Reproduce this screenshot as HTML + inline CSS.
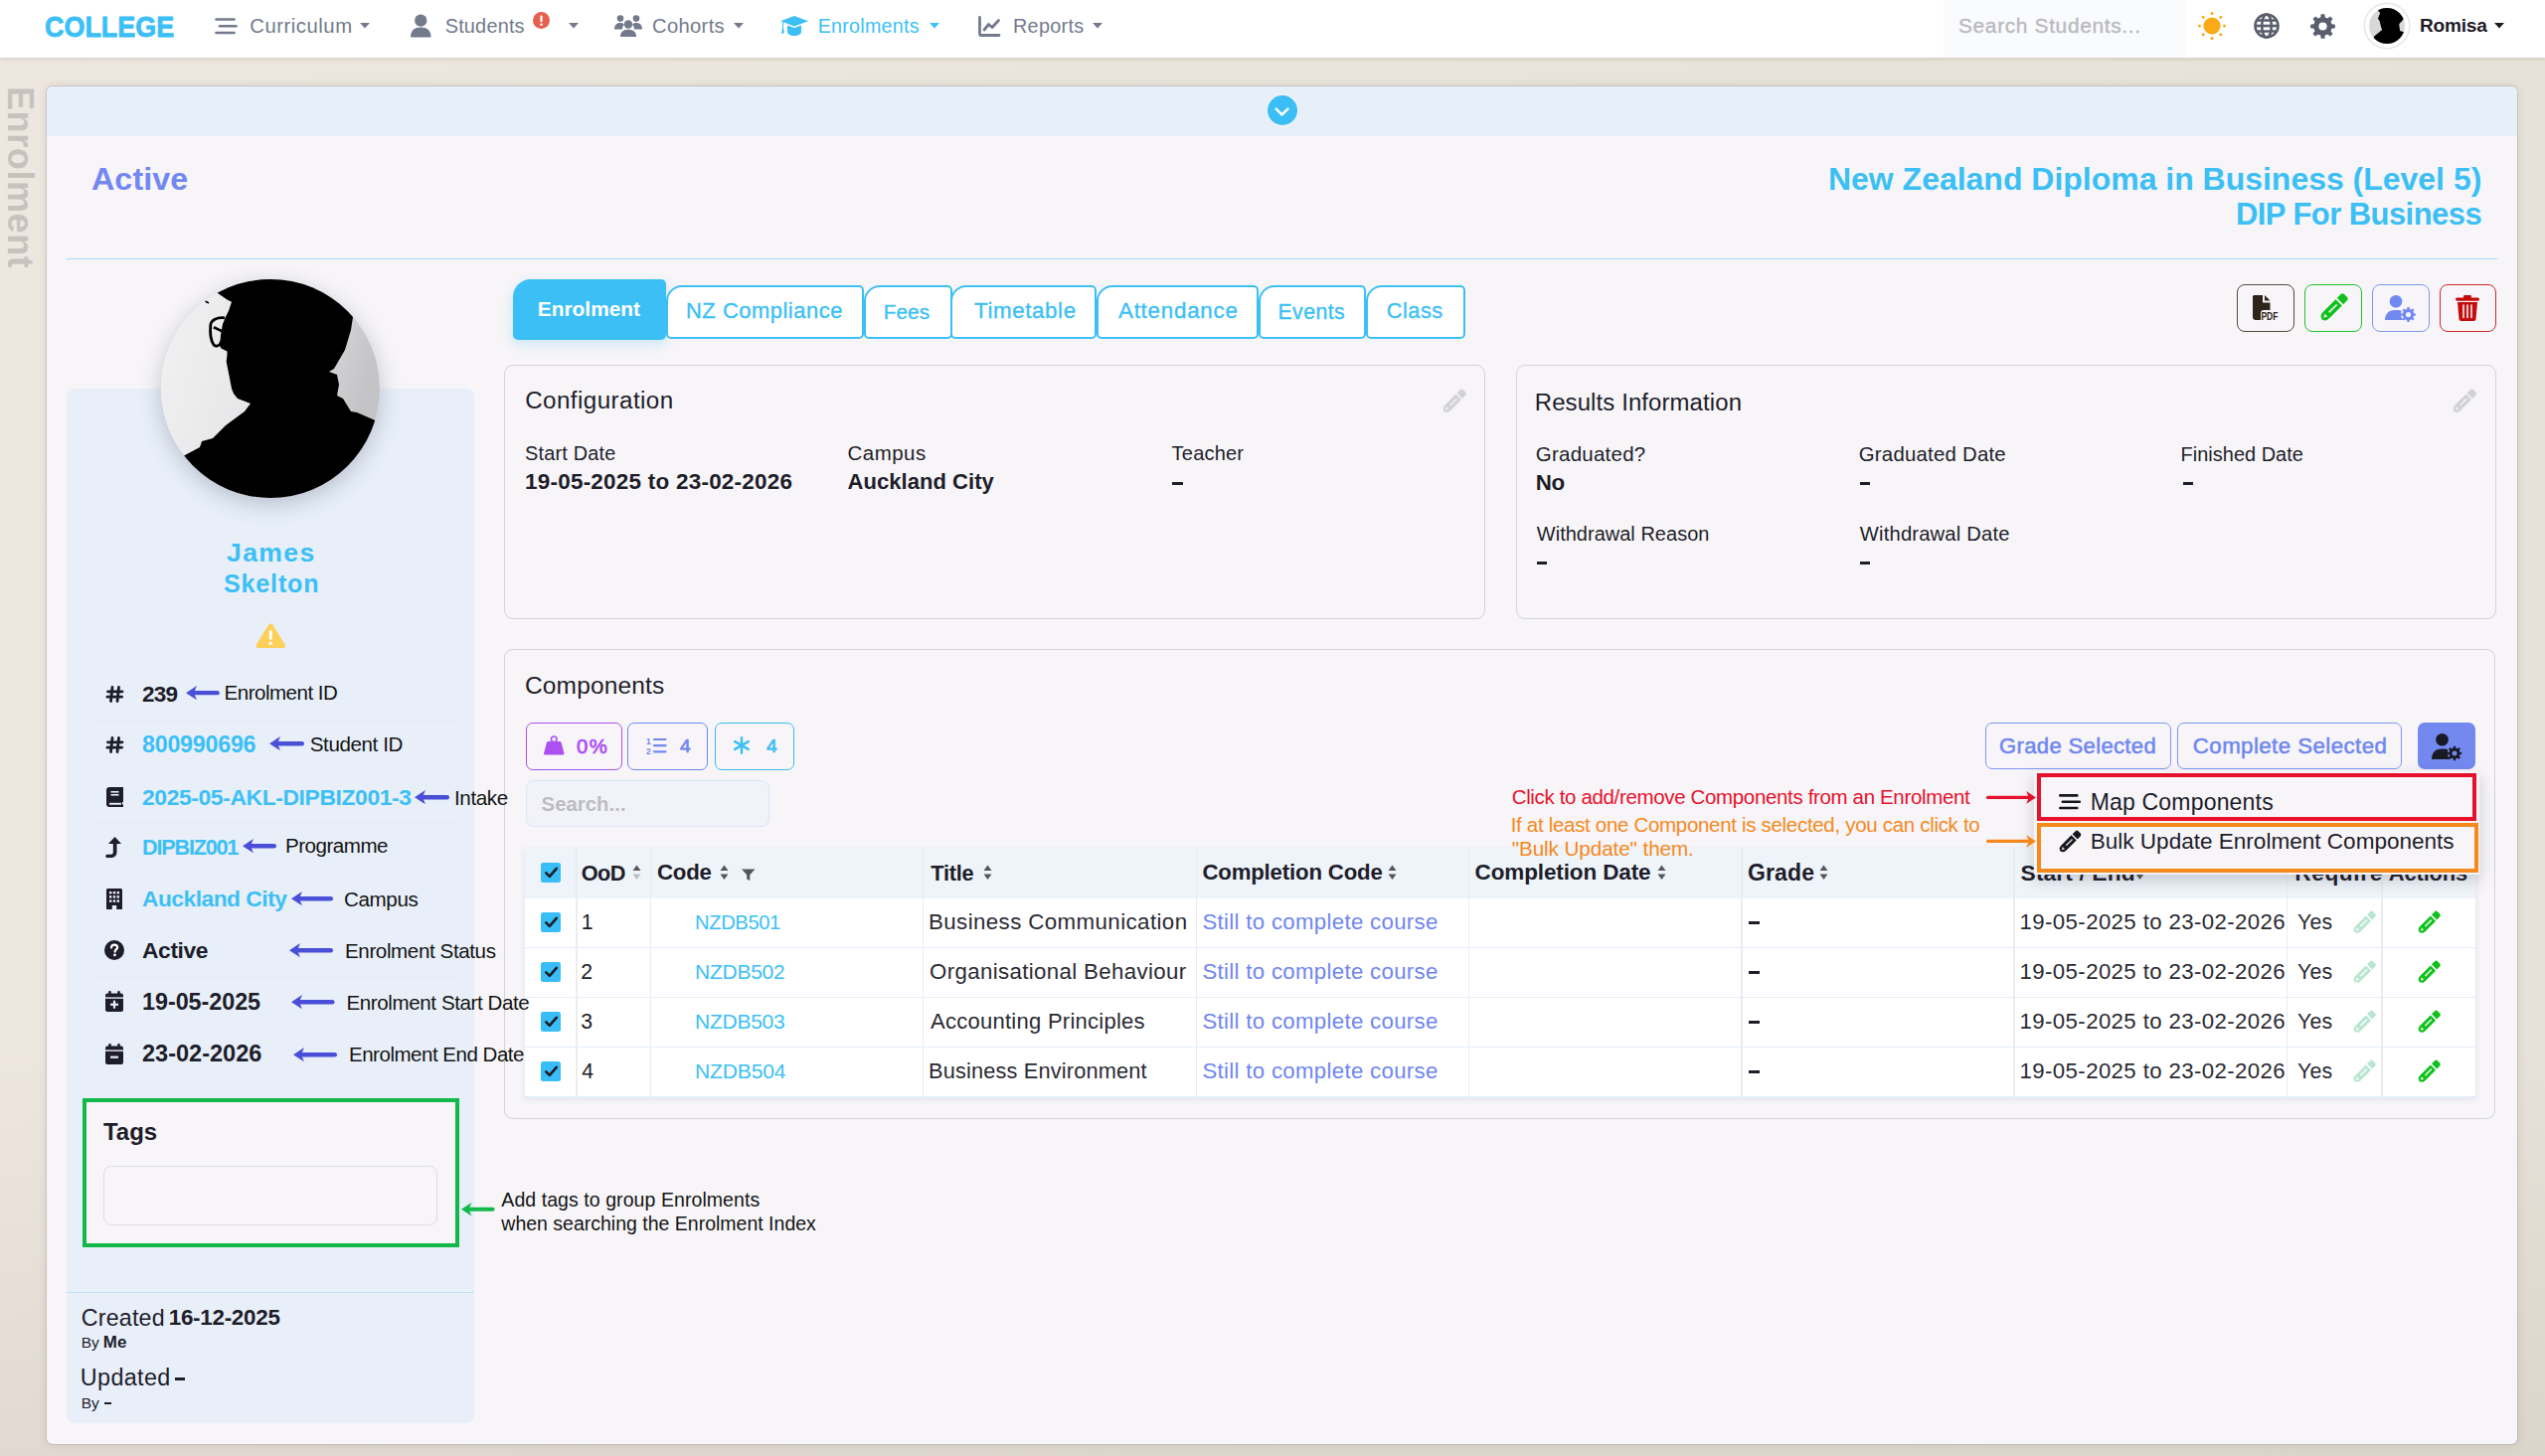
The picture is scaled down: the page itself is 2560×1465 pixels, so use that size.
<!DOCTYPE html><html><head><meta charset="utf-8"><title>Enrolment</title><style>
html,body{margin:0;padding:0;width:2560px;height:1465px;overflow:hidden;}
body{position:relative;font-family:"Liberation Sans",sans-serif;background:linear-gradient(90deg,#eee7e0 0%,#e9e4dc 45%,#e7e2d9 100%);}
.t{position:absolute;white-space:nowrap;line-height:0;}
.b{position:absolute;box-sizing:border-box;}
svg{display:block}
</style></head><body>
<div class="b" style="left:0px;top:58px;width:2560px;height:1407px;background:linear-gradient(180deg,rgba(0,0,0,0) 0%,rgba(0,0,0,0) 70%,rgba(60,40,20,0.07) 100%);"></div>
<div class="b" style="left:0px;top:0px;width:2560px;height:58px;background:#fff;box-shadow:0 1px 4px rgba(80,60,40,0.18);"></div>
<div class="t" style="left:45.31px;top:26.07px;font-size:30.38px;color:#3cbff5;transform-origin:0 0;transform:scaleX(0.8869);font-weight:bold;-webkit-text-stroke:0.8px #3cbff5;">COLLEGE</div>
<svg style="position:absolute;left:215.5px;top:17.8px;width:23.0px;height:17.0px;overflow:visible" viewBox="0 0 23.0 17.0" ><g transform="scale(1.0)" stroke="#737a8c" stroke-width="2.6" stroke-linecap="round"><line x1="1.5" y1="1.5" x2="19.5" y2="1.5"/><line x1="5" y1="8.3" x2="21.5" y2="8.3"/><line x1="1.5" y1="15" x2="19.5" y2="15"/></g></svg>
<div class="t" style="left:251.30px;top:25.96px;font-size:20.29px;color:#737a8c;letter-spacing:0.522px;">Curriculum</div>
<svg style="position:absolute;left:362.4px;top:23px;width:10px;height:5.6px;overflow:visible" viewBox="0 0 10 5.6" ><path d="M0 0H10L5.0 5.6Z" fill="#737a8c"/></svg>
<svg style="position:absolute;left:413px;top:15px;width:20.5px;height:22.5px;overflow:visible" viewBox="0 0 20.5 22.5" ><circle cx="10.25" cy="5.625" r="6.1499999999999995" fill="#737a8c"/><path d="M0 22.5 C0 15.3 4.1000000000000005 12.375000000000002 10.25 12.375000000000002 C16.400000000000002 12.375000000000002 20.5 15.3 20.5 22.5 Z" fill="#737a8c"/></svg>
<div class="t" style="left:447.70px;top:26.10px;font-size:19.91px;color:#737a8c;letter-spacing:0.186px;">Students</div>
<svg style="position:absolute;left:535.5px;top:12px;width:17px;height:17px;overflow:visible" viewBox="0 0 17 17" ><circle cx="8.5" cy="8.5" r="8.5" fill="#e5604f"/><rect x="7.4" y="3.6" width="2.2" height="6.6" rx="1" fill="#fff"/><circle cx="8.5" cy="12.7" r="1.3" fill="#fff"/></svg>
<svg style="position:absolute;left:571.6px;top:23px;width:10px;height:5.6px;overflow:visible" viewBox="0 0 10 5.6" ><path d="M0 0H10L5.0 5.6Z" fill="#737a8c"/></svg>
<svg style="position:absolute;left:617.7px;top:15px;width:28px;height:22px;overflow:visible" viewBox="0 0 28 22" ><circle cx="6" cy="3.6" r="3.3" fill="#737a8c"/><circle cx="22" cy="3.6" r="3.3" fill="#737a8c"/><path d="M0 14.5 C0 10 2.5 8 6 8 C8 8 9 8.6 10 9.5 C8.5 11 8 13 8 14.5Z" fill="#737a8c"/><path d="M28 14.5 C28 10 25.5 8 22 8 C20 8 19 8.6 18 9.5 C19.5 11 20 13 20 14.5Z" fill="#737a8c"/><circle cx="14" cy="9.5" r="4.2" fill="#737a8c"/><path d="M6 22 C6 17 9 14.8 14 14.8 C19 14.8 22 17 22 22Z" fill="#737a8c"/></svg>
<div class="t" style="left:656.00px;top:25.99px;font-size:20.21px;color:#737a8c;letter-spacing:0.333px;">Cohorts</div>
<svg style="position:absolute;left:738px;top:23px;width:10px;height:5.6px;overflow:visible" viewBox="0 0 10 5.6" ><path d="M0 0H10L5.0 5.6Z" fill="#737a8c"/></svg>
<svg style="position:absolute;left:784.5px;top:16px;width:28px;height:20px;overflow:visible" viewBox="0 0 28 20" ><path d="M14 0 L28 5.2 L14 10.4 L3 6.3 L3 12 L4 17 L1 18 L2 12 L2 5.5 L0 5.2Z" fill="#3cbff5"/><path d="M7 9.5 L14 12 L21 9.5 L21 16 C21 18.5 17.5 20 14 20 C10.5 20 7 18.5 7 16Z" fill="#3cbff5"/></svg>
<div class="t" style="left:822.70px;top:26.17px;font-size:19.71px;color:#3cbff5;letter-spacing:0.256px;">Enrolments</div>
<svg style="position:absolute;left:935px;top:23px;width:10px;height:5.6px;overflow:visible" viewBox="0 0 10 5.6" ><path d="M0 0H10L5.0 5.6Z" fill="#3cbff5"/></svg>
<svg style="position:absolute;left:983.8px;top:16px;width:23px;height:21px;overflow:visible" viewBox="0 0 23 21" ><g fill="none" stroke="#737a8c" stroke-width="2.8" stroke-linecap="round" stroke-linejoin="round"><path d="M1.5 1.5 V18 a1.5 1.5 0 0 0 1.5 1.5 H21"/><path d="M6 14 L10.5 8.5 L14 11.5 L20.5 4.5"/></g></svg>
<div class="t" style="left:1019.00px;top:26.15px;font-size:19.77px;color:#737a8c;letter-spacing:0.333px;">Reports</div>
<svg style="position:absolute;left:1098.6px;top:23px;width:10px;height:5.6px;overflow:visible" viewBox="0 0 10 5.6" ><path d="M0 0H10L5.0 5.6Z" fill="#737a8c"/></svg>
<div class="b" style="left:1955px;top:0px;width:244px;height:57px;background:#fafbfd;"></div>
<div class="t" style="left:1970.00px;top:25.75px;font-size:20.92px;color:#b9b9bd;letter-spacing:0.647px;-webkit-text-stroke:0.35px #b9b9bd;">Search Students...</div>
<svg style="position:absolute;left:2211px;top:12px;width:28px;height:28px;overflow:visible" viewBox="0 0 28 28" ><circle cx="14" cy="14" r="8.6" fill="#fba918"/><circle cx="26.50" cy="14.00" r="1.5" fill="#fba918"/><circle cx="22.84" cy="22.84" r="1.5" fill="#fba918"/><circle cx="14.00" cy="26.50" r="1.5" fill="#fba918"/><circle cx="5.16" cy="22.84" r="1.5" fill="#fba918"/><circle cx="1.50" cy="14.00" r="1.5" fill="#fba918"/><circle cx="5.16" cy="5.16" r="1.5" fill="#fba918"/><circle cx="14.00" cy="1.50" r="1.5" fill="#fba918"/><circle cx="22.84" cy="5.16" r="1.5" fill="#fba918"/></svg>
<svg style="position:absolute;left:2267px;top:13px;width:26px;height:26px;overflow:visible" viewBox="0 0 26 26" ><g fill="none" stroke="#5a5d6c" stroke-width="2.6"><circle cx="13" cy="13" r="11.5"/><ellipse cx="13" cy="13" rx="4.8" ry="11.5"/><line x1="1.5" y1="13" x2="24.5" y2="13"/><path d="M3.5 7.5 H22.5 M3.5 18.5 H22.5"/></g></svg>
<svg style="position:absolute;left:2322.5px;top:12.5px;width:27.0px;height:27.0px;overflow:visible" viewBox="0 0 27.0 27.0" ><polygon points="22.48,11.30 25.86,11.63 25.86,15.37 22.48,15.70 21.41,18.30 23.56,20.92 20.92,23.56 18.30,21.41 15.70,22.48 15.37,25.86 11.63,25.86 11.30,22.48 8.70,21.41 6.08,23.56 3.44,20.92 5.59,18.30 4.52,15.70 1.14,15.37 1.14,11.63 4.52,11.30 5.59,8.70 3.44,6.08 6.08,3.44 8.70,5.59 11.30,4.52 11.63,1.14 15.37,1.14 15.70,4.52 18.30,5.59 20.92,3.44 23.56,6.08 21.41,8.70" fill="#5a5d6c"/><circle cx="13.5" cy="13.5" r="9.06" fill="#5a5d6c"/><circle cx="13.5" cy="13.5" r="4.12" fill="#fff"/></svg>
<div class="b" style="left:2379px;top:4px;width:44px;height:44px;border-radius:50%;background:#fff;box-shadow:0 0 0 1.5px #e6e6ea;"></div>
<svg style="position:absolute;left:2383px;top:8px;width:36px;height:36px" viewBox="0 0 220 220"><defs><clipPath id="cs"><circle cx="110" cy="110" r="110"/></clipPath></defs><g clip-path="url(#cs)"><rect width="220" height="220" fill="#d8d8d8"/><path d="M40 0 L220 0 L220 60 L185 100 L190 140 L220 150 L220 220 L20 220 L30 175 L80 135 L72 110 L65 80 L55 65 L68 30Z" fill="#000"/></g></svg>
<div class="t" style="left:2434.00px;top:26.29px;font-size:19.06px;color:#1c1b27;font-weight:bold;letter-spacing:-0.200px;">Romisa</div>
<svg style="position:absolute;left:2508.8px;top:23px;width:10px;height:5.6px;overflow:visible" viewBox="0 0 10 5.6" ><path d="M0 0H10L5.0 5.6Z" fill="#1c1b27"/></svg>
<div class="t" style="left:0;top:0;font-size:36px;font-weight:bold;color:#c6c3be;line-height:0;transform-origin:0 0;transform:translate(19.6px,87px) rotate(90deg);letter-spacing:0.6px">Enrolment</div>
<div class="b" style="left:46.6px;top:86.6px;width:2485.6px;height:1366.1000000000001px;background:#f7f5f8;border-radius:6px;box-shadow:0 0 0 1px rgba(170,170,180,0.45),0 0 10px rgba(80,60,40,0.15);"></div>
<div class="b" style="left:46.6px;top:86.6px;width:2485.6px;height:50.400000000000006px;background:#e7eff9;border-radius:6px 6px 0 0;"></div>
<div class="b" style="left:1274.5px;top:96px;width:30px;height:30px;border-radius:50%;background:#3bbef5;box-shadow:0 0 0 1.5px rgba(255,255,255,0.3)"></div>
<svg style="position:absolute;left:1282px;top:108px;width:15px;height:9px;overflow:visible" viewBox="0 0 15 9" ><path d="M1.6 1.6 L7.5 7.4 L13.4 1.6" fill="none" stroke="#fff" stroke-width="2.6" stroke-linecap="round" stroke-linejoin="round"/></svg>
<div class="t" style="left:92.00px;top:179.63px;font-size:32.23px;color:#7287f0;font-weight:bold;letter-spacing:0.100px;">Active</div>
<div class="t" style="left:1839.00px;top:179.92px;font-size:31.97px;color:#3cbff5;font-weight:bold;">New Zealand Diploma in Business (Level 5)</div>
<div class="t" style="left:2249.00px;top:216.27px;font-size:30.94px;color:#3cbff5;font-weight:bold;letter-spacing:-0.533px;">DIP For Business</div>
<div class="b" style="left:67px;top:259.5px;width:2444.6px;height:1.5px;background:#a9dcf6;"></div>
<div class="b" style="left:67px;top:391.4px;width:410px;height:1040.3000000000002px;background:#e8eff9;border-radius:8px;"></div>
<div class="b" style="left:162px;top:280.5px;width:220px;height:220px;border-radius:50%;box-shadow:0 6px 22px rgba(60,70,90,0.28);"></div>
<svg style="position:absolute;left:162px;top:280.5px;width:220px;height:220px" viewBox="0 0 220 220">
<defs><clipPath id="av"><circle cx="110" cy="110" r="110"/></clipPath>
<linearGradient id="avg" x1="0" y1="0" x2="1" y2="0.3"><stop offset="0" stop-color="#f2f2f3"/><stop offset="0.55" stop-color="#e6e6e8"/><stop offset="1" stop-color="#c4c4c6"/></linearGradient></defs>
<g clip-path="url(#av)"><rect width="220" height="220" fill="url(#avg)"/>
<path d="M40 0 L57 14 L66.5 20.4 L71 22.7 L68 31.7 L65 37.8 L62 45 L60 56 L59.7 60.4 L58.2 65 L60.4 69.5 L66.5 72.5 L66.5 75.5 L65.7 83 L68 94.4 L71 110 L73 115 L77 120 L90 125 L84 133 L65 147 L52 160 L41 163 L39 169 L24 177 L0 190 L0 220 L220 220 L220 144 L197 134 L191 133 L183 120 L177 117 L179 106 L177 96 L169 93 L174 90 L185 71 L191 51 L193 38 L220 30 L220 0 Z" fill="#000"/>
<path d="M64 38.8 C56 38 50.5 41 49.8 46 C49.2 53 50.2 62 53 66 C55 68 58 67.5 60.5 64" fill="none" stroke="#000" stroke-width="2.8"/>
<path d="M52.9 48.3 L62.7 52.9" stroke="#000" stroke-width="2.6"/>
<path d="M44.5 22 L48 24" stroke="#000" stroke-width="1.6"/>
</g></svg>
<div class="t" style="left:228.00px;top:555.78px;font-size:26.60px;color:#3cbff5;font-weight:bold;letter-spacing:1.375px;">James</div>
<div class="t" style="left:224.90px;top:587.29px;font-size:25.11px;color:#3cbff5;font-weight:bold;letter-spacing:0.833px;">Skelton</div>
<svg style="position:absolute;left:257px;top:625.7px;width:30.5px;height:26.1px;overflow:visible" viewBox="0 0 30.5 26.1" ><path d="M15.25 1.5 C16.3 1.5 17 2 17.6 3 L29.6 22.6 C30.6 24.3 29.6 26.1 27.6 26.1 L2.9 26.1 C0.9 26.1 -0.1 24.3 0.9 22.6 L12.9 3 C13.5 2 14.2 1.5 15.25 1.5Z" fill="#fdd05c"/><rect x="13.8" y="8.2" width="2.9" height="9.5" rx="1.4" fill="#fff"/><circle cx="15.25" cy="21.3" r="1.8" fill="#fff"/></svg>
<svg style="position:absolute;left:107px;top:690.1px;width:17px;height:17px;overflow:visible" viewBox="0 0 17 17" ><g stroke="#1e1d2a" stroke-width="2.8" stroke-linecap="round"><line x1="6" y1="1.5" x2="4.5" y2="15.5"/><line x1="12.5" y1="1.5" x2="11" y2="15.5"/><line x1="1.5" y1="5.8" x2="16" y2="5.8"/><line x1="1" y1="11.2" x2="15.5" y2="11.2"/></g></svg>
<div class="t" style="left:143.00px;top:698.78px;font-size:22.57px;color:#1e1d2a;font-weight:bold;letter-spacing:-0.800px;">239</div>
<svg style="position:absolute;left:187px;top:689.875px;width:33.80000000000001px;height:14.25px;overflow:visible" viewBox="0 0 33.80000000000001 14.25" ><line x1="5.7" y1="7.125" x2="31.55000000000001" y2="7.125" stroke="#4a4fd8" stroke-width="4.5" stroke-linecap="round"/><path d="M0 7.125 L10.924999999999999 0 L8.075 7.125 L10.924999999999999 14.25Z" fill="#4a4fd8"/></svg>
<div class="t" style="left:225.50px;top:697.37px;font-size:20.56px;color:#141414;letter-spacing:-0.500px;z-index:5;">Enrolment ID</div>
<div class="b" style="left:90px;top:724.5px;width:371px;height:1.0px;background:rgba(205,210,220,0.14);"></div>
<svg style="position:absolute;left:107px;top:741.0px;width:17px;height:17px;overflow:visible" viewBox="0 0 17 17" ><g stroke="#1e1d2a" stroke-width="2.8" stroke-linecap="round"><line x1="6" y1="1.5" x2="4.5" y2="15.5"/><line x1="12.5" y1="1.5" x2="11" y2="15.5"/><line x1="1.5" y1="5.8" x2="16" y2="5.8"/><line x1="1" y1="11.2" x2="15.5" y2="11.2"/></g></svg>
<div class="t" style="left:143.00px;top:749.43px;font-size:23.29px;color:#3cbff5;font-weight:bold;letter-spacing:-0.250px;">800990696</div>
<svg style="position:absolute;left:271px;top:741.375px;width:35px;height:14.25px;overflow:visible" viewBox="0 0 35 14.25" ><line x1="5.7" y1="7.125" x2="32.75" y2="7.125" stroke="#4a4fd8" stroke-width="4.5" stroke-linecap="round"/><path d="M0 7.125 L10.924999999999999 0 L8.075 7.125 L10.924999999999999 14.25Z" fill="#4a4fd8"/></svg>
<div class="t" style="left:311.80px;top:748.85px;font-size:20.62px;color:#141414;letter-spacing:-0.422px;z-index:5;">Student ID</div>
<div class="b" style="left:90px;top:776.5px;width:371px;height:1.0px;background:rgba(205,210,220,0.14);"></div>
<svg style="position:absolute;left:107px;top:791.5px;width:17px;height:20px;overflow:visible" viewBox="0 0 17 20" ><path d="M3 0 H17 V15 H16 V17.5 H17 V20 H3 C1.3 20 0 18.7 0 17 V3 C0 1.3 1.3 0 3 0Z" fill="#1e1d2a"/><rect x="3" y="15.8" width="12" height="1.9" fill="#e8eff9"/><rect x="4.5" y="4" width="8" height="1.6" fill="#e8eff9"/><rect x="4.5" y="7" width="8" height="1.6" fill="#e8eff9"/></svg>
<div class="t" style="left:143.00px;top:801.56px;font-size:22.91px;color:#3cbff5;font-weight:bold;letter-spacing:-0.409px;">2025-05-AKL-DIPBIZ001-3</div>
<svg style="position:absolute;left:417px;top:795.375px;width:35px;height:14.25px;overflow:visible" viewBox="0 0 35 14.25" ><line x1="5.7" y1="7.125" x2="32.75" y2="7.125" stroke="#4a4fd8" stroke-width="4.5" stroke-linecap="round"/><path d="M0 7.125 L10.924999999999999 0 L8.075 7.125 L10.924999999999999 14.25Z" fill="#4a4fd8"/></svg>
<div class="t" style="left:457.00px;top:802.85px;font-size:20.63px;color:#141414;letter-spacing:-0.400px;z-index:5;">Intake</div>
<div class="b" style="left:90px;top:827.4px;width:371px;height:1.0px;background:rgba(205,210,220,0.14);"></div>
<svg style="position:absolute;left:106px;top:842.4px;width:18px;height:21px;overflow:visible" viewBox="0 0 18 21" ><path d="M9.5 0 L16 7 H11.5 V15.5 C11.5 18.8 9 21 5.8 21 H2 C1 21 0.3 20.3 0.3 19.4 C0.3 18.5 1 17.8 2 17.8 H5.6 C7 17.8 7.8 17 7.8 15.6 V7 H3Z" fill="#1e1d2a"/></svg>
<div class="t" style="left:143.00px;top:852.86px;font-size:21.73px;color:#3cbff5;font-weight:bold;letter-spacing:-1.250px;">DIPBIZ001</div>
<svg style="position:absolute;left:244px;top:843.975px;width:34px;height:14.25px;overflow:visible" viewBox="0 0 34 14.25" ><line x1="5.7" y1="7.125" x2="31.75" y2="7.125" stroke="#4a4fd8" stroke-width="4.5" stroke-linecap="round"/><path d="M0 7.125 L10.924999999999999 0 L8.075 7.125 L10.924999999999999 14.25Z" fill="#4a4fd8"/></svg>
<div class="t" style="left:287.00px;top:851.46px;font-size:20.59px;color:#141414;letter-spacing:-0.500px;z-index:5;">Programme</div>
<div class="b" style="left:90px;top:879px;width:371px;height:1px;background:rgba(205,210,220,0.14);"></div>
<svg style="position:absolute;left:107px;top:893.5px;width:16px;height:21px;overflow:visible" viewBox="0 0 16 21" ><path d="M1.5 0 H14.5 C15.3 0 16 .7 16 1.5 V21 H10.2 V17 H5.8 V21 H0 V1.5 C0 .7 .7 0 1.5 0Z" fill="#1e1d2a"/><g fill="#e8eff9"><rect x="3" y="3" width="2.4" height="2.4"/><rect x="6.8" y="3" width="2.4" height="2.4"/><rect x="10.6" y="3" width="2.4" height="2.4"/><rect x="3" y="7.2" width="2.4" height="2.4"/><rect x="6.8" y="7.2" width="2.4" height="2.4"/><rect x="10.6" y="7.2" width="2.4" height="2.4"/><rect x="3" y="11.4" width="2.4" height="2.4"/><rect x="6.8" y="11.4" width="2.4" height="2.4"/><rect x="10.6" y="11.4" width="2.4" height="2.4"/></g></svg>
<div class="t" style="left:143.00px;top:904.10px;font-size:22.79px;color:#3cbff5;font-weight:bold;letter-spacing:-0.500px;">Auckland City</div>
<svg style="position:absolute;left:293px;top:897.375px;width:42px;height:14.25px;overflow:visible" viewBox="0 0 42 14.25" ><line x1="5.7" y1="7.125" x2="39.75" y2="7.125" stroke="#4a4fd8" stroke-width="4.5" stroke-linecap="round"/><path d="M0 7.125 L10.924999999999999 0 L8.075 7.125 L10.924999999999999 14.25Z" fill="#4a4fd8"/></svg>
<div class="t" style="left:346.00px;top:904.85px;font-size:20.62px;color:#141414;letter-spacing:-0.400px;z-index:5;">Campus</div>
<div class="b" style="left:90px;top:931px;width:371px;height:1px;background:rgba(205,210,220,0.14);"></div>
<svg style="position:absolute;left:105px;top:946px;width:20px;height:20px;overflow:visible" viewBox="0 0 20 20" ><circle cx="10" cy="10" r="10" fill="#1e1d2a"/><path d="M7 7.6 C7 5.8 8.3 4.7 10.1 4.7 C11.9 4.7 13.1 5.8 13.1 7.3 C13.1 9.4 10.6 9.5 10.6 11.6" fill="none" stroke="#fff" stroke-width="2.2" stroke-linecap="round"/><circle cx="10.5" cy="14.9" r="1.4" fill="#fff"/></svg>
<div class="t" style="left:143.00px;top:956.08px;font-size:22.85px;color:#1e1d2a;font-weight:bold;letter-spacing:-0.400px;">Active</div>
<svg style="position:absolute;left:291px;top:949.375px;width:44px;height:14.25px;overflow:visible" viewBox="0 0 44 14.25" ><line x1="5.7" y1="7.125" x2="41.75" y2="7.125" stroke="#4a4fd8" stroke-width="4.5" stroke-linecap="round"/><path d="M0 7.125 L10.924999999999999 0 L8.075 7.125 L10.924999999999999 14.25Z" fill="#4a4fd8"/></svg>
<div class="t" style="left:347.00px;top:956.86px;font-size:20.60px;color:#141414;letter-spacing:-0.400px;z-index:5;">Enrolment Status</div>
<div class="b" style="left:90px;top:982.6px;width:371px;height:1.0px;background:rgba(205,210,220,0.14);"></div>
<svg style="position:absolute;left:106px;top:997.1px;width:18px;height:21px;overflow:visible" viewBox="0 0 18 21" ><rect x="3.2" y="0" width="2.6" height="4" rx="1" fill="#1e1d2a"/><rect x="12.2" y="0" width="2.6" height="4" rx="1" fill="#1e1d2a"/><rect x="0" y="2.5" width="18" height="18.5" rx="2" fill="#1e1d2a"/><rect x="0" y="6.4" width="18" height="1.4" fill="#e8eff9"/><rect x="5" y="12.6" width="8" height="2.2" fill="#e8eff9"/><rect x="7.9" y="9.7" width="2.2" height="8" fill="#e8eff9"/></svg>
<div class="t" style="left:143.00px;top:1007.50px;font-size:23.36px;color:#1e1d2a;font-weight:bold;letter-spacing:-0.044px;">19-05-2025</div>
<svg style="position:absolute;left:292.5px;top:1001.375px;width:43.5px;height:14.25px;overflow:visible" viewBox="0 0 43.5 14.25" ><line x1="5.7" y1="7.125" x2="41.25" y2="7.125" stroke="#4a4fd8" stroke-width="4.5" stroke-linecap="round"/><path d="M0 7.125 L10.924999999999999 0 L8.075 7.125 L10.924999999999999 14.25Z" fill="#4a4fd8"/></svg>
<div class="t" style="left:348.50px;top:1008.87px;font-size:20.57px;color:#141414;letter-spacing:-0.405px;z-index:5;">Enrolment Start Date</div>
<div class="b" style="left:90px;top:1035px;width:371px;height:1px;background:rgba(205,210,220,0.14);"></div>
<svg style="position:absolute;left:106px;top:1049.5px;width:18px;height:21px;overflow:visible" viewBox="0 0 18 21" ><rect x="3.2" y="0" width="2.6" height="4" rx="1" fill="#1e1d2a"/><rect x="12.2" y="0" width="2.6" height="4" rx="1" fill="#1e1d2a"/><rect x="0" y="2.5" width="18" height="18.5" rx="2" fill="#1e1d2a"/><rect x="0" y="6.4" width="18" height="1.4" fill="#e8eff9"/><rect x="5" y="12.6" width="8" height="2.2" fill="#e8eff9"/></svg>
<div class="t" style="left:143.00px;top:1059.83px;font-size:23.57px;color:#1e1d2a;font-weight:bold;letter-spacing:-0.022px;">23-02-2026</div>
<svg style="position:absolute;left:295px;top:1053.875px;width:44px;height:14.25px;overflow:visible" viewBox="0 0 44 14.25" ><line x1="5.7" y1="7.125" x2="41.75" y2="7.125" stroke="#4a4fd8" stroke-width="4.5" stroke-linecap="round"/><path d="M0 7.125 L10.924999999999999 0 L8.075 7.125 L10.924999999999999 14.25Z" fill="#4a4fd8"/></svg>
<div class="t" style="left:351.00px;top:1061.38px;font-size:20.53px;color:#141414;letter-spacing:-0.488px;z-index:5;">Enrolment End Date</div>
<div class="b" style="left:82.8px;top:1105px;width:379.2px;height:150px;border:4px solid #12b84a;background:#f7f5f8;"></div>
<div class="t" style="left:104.00px;top:1139.39px;font-size:23.98px;color:#1e1d2a;font-weight:bold;">Tags</div>
<div class="b" style="left:104px;top:1173px;width:336.4px;height:60px;border:1.5px solid #dcdce0;border-radius:8px;background:#f7f5f8;"></div>
<svg style="position:absolute;left:464px;top:1210.05px;width:33.60000000000002px;height:13.5px;overflow:visible" viewBox="0 0 33.60000000000002 13.5" ><line x1="5.3999999999999995" y1="6.75" x2="31.600000000000023" y2="6.75" stroke="#12b84a" stroke-width="4" stroke-linecap="round"/><path d="M0 6.75 L10.35 0 L7.6499999999999995 6.75 L10.35 13.5Z" fill="#12b84a"/></svg>
<div class="t" style="left:504.30px;top:1206.63px;font-size:19.52px;color:#141414;letter-spacing:0.063px;">Add tags to group Enrolments</div>
<div class="t" style="left:504.30px;top:1231.24px;font-size:19.51px;color:#141414;">when searching the Enrolment Index</div>
<div class="b" style="left:67px;top:1300px;width:410px;height:1.2000000000000455px;background:#bfe0f5;"></div>
<div class="t" style="left:81.80px;top:1325.95px;font-size:23.23px;color:#1e1d2a;letter-spacing:0.200px;">Created</div>
<div class="t" style="left:169.70px;top:1326.25px;font-size:22.36px;color:#1e1d2a;font-weight:bold;letter-spacing:-0.244px;">16-12-2025</div>
<div class="t" style="left:81.80px;top:1351.01px;font-size:15.54px;color:#1e1d2a;letter-spacing:-0.100px;">By</div>
<div class="t" style="left:103.80px;top:1350.53px;font-size:16.94px;color:#1e1d2a;font-weight:bold;">Me</div>
<div class="t" style="left:80.80px;top:1385.90px;font-size:23.37px;color:#1e1d2a;letter-spacing:0.367px;">Updated</div>
<div class="b" style="left:176.4px;top:1386px;width:9.599999999999994px;height:3px;background:#1e1d2a;"></div>
<div class="t" style="left:81.80px;top:1411.61px;font-size:15.54px;color:#1e1d2a;letter-spacing:-0.100px;">By</div>
<div class="b" style="left:104.5px;top:1410.5px;width:7.700000000000003px;height:2.5px;background:#1e1d2a;"></div>
<div class="b" style="left:516px;top:281.3px;width:154px;height:60.4px;background:#3cbff5;border-radius:18px 5px 5px 5px;box-shadow:0 4px 12px rgba(60,190,245,0.25);"></div>
<div class="t" style="left:540.80px;top:311.48px;font-size:20.83px;color:#fff;font-weight:bold;letter-spacing:0.025px;">Enrolment</div>
<div class="b" style="left:670px;top:286.6px;width:199px;height:54.7px;background:#fff;border:2.2px solid #3cbff5;border-radius:16px 5px 5px 5px;"></div>
<div class="t" style="left:690.00px;top:313.40px;font-size:21.91px;color:#3cbff5;letter-spacing:0.533px;font-weight:normal;-webkit-text-stroke:0.35px #3cbff5;">NZ Compliance</div>
<div class="b" style="left:869px;top:286.6px;width:88.70000000000005px;height:54.7px;background:#fff;border:2.2px solid #3cbff5;border-radius:16px 5px 5px 5px;"></div>
<div class="t" style="left:888.70px;top:313.81px;font-size:20.72px;color:#3cbff5;letter-spacing:0.100px;font-weight:normal;-webkit-text-stroke:0.35px #3cbff5;">Fees</div>
<div class="b" style="left:956px;top:286.6px;width:147px;height:54.7px;background:#fff;border:2.2px solid #3cbff5;border-radius:16px 5px 5px 5px;"></div>
<div class="t" style="left:980.00px;top:313.27px;font-size:22.31px;color:#3cbff5;letter-spacing:0.625px;font-weight:normal;-webkit-text-stroke:0.35px #3cbff5;">Timetable</div>
<div class="b" style="left:1103px;top:286.6px;width:162.5999999999999px;height:54.7px;background:#fff;border:2.2px solid #3cbff5;border-radius:16px 5px 5px 5px;"></div>
<div class="t" style="left:1125.00px;top:313.27px;font-size:22.31px;color:#3cbff5;letter-spacing:0.778px;font-weight:normal;-webkit-text-stroke:0.35px #3cbff5;">Attendance</div>
<div class="b" style="left:1265.6px;top:286.6px;width:108.40000000000009px;height:54.7px;background:#fff;border:2.2px solid #3cbff5;border-radius:16px 5px 5px 5px;"></div>
<div class="t" style="left:1285.50px;top:313.63px;font-size:21.27px;color:#3cbff5;letter-spacing:0.420px;font-weight:normal;-webkit-text-stroke:0.35px #3cbff5;">Events</div>
<div class="b" style="left:1374px;top:286.6px;width:100px;height:54.7px;background:#fff;border:2.2px solid #3cbff5;border-radius:16px 5px 5px 5px;"></div>
<div class="t" style="left:1394.80px;top:313.48px;font-size:21.68px;color:#3cbff5;letter-spacing:0.550px;font-weight:normal;-webkit-text-stroke:0.35px #3cbff5;">Class</div>
<div class="b" style="left:2250px;top:286.4px;width:57.7px;height:47.3px;border:1.8px solid #55493f;border-radius:8px;"></div>
<svg style="position:absolute;left:2266px;top:297px;width:26px;height:25px;overflow:visible" viewBox="0 0 26 25" ><path d="M1.5 0 H10 V7.5 H17.5 V15 H11 C9.3 15 8 16.3 8 18 V25 H3 C1.3 25 0 23.7 0 22 V1.5 C0 .7 .7 0 1.5 0Z" fill="#2f2419"/><path d="M12 0 L17.5 5.5 H12Z" fill="#2f2419"/><text x="8.4" y="25" font-family="Liberation Sans" font-weight="bold" font-size="10.8" fill="#2f2419" textLength="17" lengthAdjust="spacingAndGlyphs">PDF</text></svg>
<div class="b" style="left:2318px;top:286.4px;width:57.7px;height:47.3px;border:1.8px solid #22c32e;border-radius:8px;"></div>
<svg style="position:absolute;left:2334.5px;top:297px;width:25px;height:25px;overflow:visible" viewBox="0 0 25 25" ><g transform="scale(1.25)"><g transform="translate(10,10) rotate(-45) translate(-13.6,0)"><path d="M0 0 L1.2 -2.2 C2 -3.2 3.5 -3.6 5.5 -3.6 H19.4 V3.6 H5.5 C3.5 3.6 2 3.2 1.2 2.2Z" fill="#0fc11b"/><path d="M20.9 -3.6 H25 a2.2 2.2 0 0 1 2.2 2.2 V1.4 a2.2 2.2 0 0 1 -2.2 2.2 H20.9Z" fill="#0fc11b"/><rect x="8.2" y="-0.75" width="9" height="1.5" fill="#f7f5f8" opacity="0.85"/><path d="M2 0 L5 -1.7 V1.7Z" fill="#f7f5f8" opacity="0.9"/></g></g></svg>
<div class="b" style="left:2386px;top:286.4px;width:57.7px;height:47.3px;border:1.8px solid #8097f5;border-radius:8px;"></div>
<svg style="position:absolute;left:2399px;top:297px;width:32px;height:26px;overflow:visible" viewBox="0 0 32 26" ><circle cx="11" cy="6.3" r="6.3" fill="#7189f0"/><path d="M0 25 C0 19 4 15 9.5 15 H13 C14.5 15 15.5 15.4 16.8 16 C15.8 18 15.8 21 17 23 L18.5 25Z" fill="#7189f0"/><polygon points="28.89,18.18 30.92,18.38 30.92,20.62 28.89,20.82 28.24,22.38 29.54,23.95 27.95,25.54 26.38,24.24 24.82,24.89 24.62,26.92 22.38,26.92 22.18,24.89 20.62,24.24 19.05,25.54 17.46,23.95 18.76,22.38 18.11,20.82 16.08,20.62 16.08,18.38 18.11,18.18 18.76,16.62 17.46,15.05 19.05,13.46 20.62,14.76 22.18,14.11 22.38,12.08 24.62,12.08 24.82,14.11 26.38,14.76 27.95,13.46 29.54,15.05 28.24,16.62" fill="#7189f0"/><circle cx="23.5" cy="19.5" r="5.44" fill="#7189f0"/><circle cx="23.5" cy="19.5" r="2.60" fill="#f7f5f8"/></svg>
<div class="b" style="left:2453.7px;top:286.4px;width:57.7px;height:47.3px;border:1.8px solid #cd2a2a;border-radius:8px;"></div>
<svg style="position:absolute;left:2470px;top:296.5px;width:24px;height:26px;overflow:visible" viewBox="0 0 24 26" ><rect x="0" y="2.5" width="24" height="3.2" rx="1.6" fill="#c40c0c"/><rect x="8" y="0" width="8" height="3" rx="1.2" fill="#c40c0c"/><path d="M2 7 H22 L20.5 24 C20.4 25.1 19.5 26 18.4 26 H5.6 C4.5 26 3.6 25.1 3.5 24Z" fill="#c40c0c"/><g stroke="#f7f5f8" stroke-width="1.6" stroke-linecap="round"><line x1="8" y1="10" x2="8" y2="22.5"/><line x1="12" y1="10" x2="12" y2="22.5"/><line x1="16" y1="10" x2="16" y2="22.5"/></g></svg>
<div class="b" style="left:507.3px;top:367.2px;width:986.9000000000001px;height:256.09999999999997px;border:1.5px solid #d3d3d8;border-radius:9px;background:#f7f5f8;"></div>
<div class="t" style="left:528.20px;top:403.22px;font-size:24.18px;color:#1e1d2a;letter-spacing:0.433px;">Configuration</div>
<svg style="position:absolute;left:1451.5px;top:392.7px;width:21.5px;height:21.5px;overflow:visible" viewBox="0 0 21.5 21.5" ><g transform="scale(1.075)"><g transform="translate(10,10) rotate(-45) translate(-13.6,0)"><path d="M0 0 L1.2 -2.2 C2 -3.2 3.5 -3.6 5.5 -3.6 H19.4 V3.6 H5.5 C3.5 3.6 2 3.2 1.2 2.2Z" fill="#d2d2d6"/><path d="M20.9 -3.6 H25 a2.2 2.2 0 0 1 2.2 2.2 V1.4 a2.2 2.2 0 0 1 -2.2 2.2 H20.9Z" fill="#d2d2d6"/><rect x="8.2" y="-0.75" width="9" height="1.5" fill="#f7f5f8" opacity="0.85"/><path d="M2 0 L5 -1.7 V1.7Z" fill="#f7f5f8" opacity="0.9"/></g></g></svg>
<div class="t" style="left:528.00px;top:456.01px;font-size:19.88px;color:#1e1d2a;letter-spacing:0.222px;">Start Date</div>
<div class="t" style="left:528.00px;top:484.92px;font-size:22.45px;color:#1e1d2a;font-weight:bold;letter-spacing:0.252px;">19-05-2025 to 23-02-2026</div>
<div class="t" style="left:852.60px;top:455.79px;font-size:20.51px;color:#1e1d2a;letter-spacing:0.460px;">Campus</div>
<div class="t" style="left:852.60px;top:485.07px;font-size:21.99px;color:#1e1d2a;font-weight:bold;letter-spacing:0.050px;">Auckland City</div>
<div class="t" style="left:1178.60px;top:455.96px;font-size:20.02px;color:#1e1d2a;letter-spacing:0.200px;">Teacher</div>
<div class="b" style="left:1178.6px;top:484.5px;width:11.400000000000091px;height:3.0px;background:#1e1d2a;"></div>
<div class="b" style="left:1525.4px;top:367.2px;width:985.4000000000001px;height:256.09999999999997px;border:1.5px solid #d3d3d8;border-radius:9px;background:#f7f5f8;"></div>
<div class="t" style="left:1543.80px;top:404.71px;font-size:23.91px;color:#1e1d2a;letter-spacing:0.122px;">Results Information</div>
<svg style="position:absolute;left:2468px;top:392.7px;width:21.5px;height:21.5px;overflow:visible" viewBox="0 0 21.5 21.5" ><g transform="scale(1.075)"><g transform="translate(10,10) rotate(-45) translate(-13.6,0)"><path d="M0 0 L1.2 -2.2 C2 -3.2 3.5 -3.6 5.5 -3.6 H19.4 V3.6 H5.5 C3.5 3.6 2 3.2 1.2 2.2Z" fill="#d2d2d6"/><path d="M20.9 -3.6 H25 a2.2 2.2 0 0 1 2.2 2.2 V1.4 a2.2 2.2 0 0 1 -2.2 2.2 H20.9Z" fill="#d2d2d6"/><rect x="8.2" y="-0.75" width="9" height="1.5" fill="#f7f5f8" opacity="0.85"/><path d="M2 0 L5 -1.7 V1.7Z" fill="#f7f5f8" opacity="0.9"/></g></g></svg>
<div class="t" style="left:1544.80px;top:456.60px;font-size:20.49px;color:#1e1d2a;letter-spacing:0.244px;">Graduated?</div>
<div class="t" style="left:1544.80px;top:485.94px;font-size:22.37px;color:#1e1d2a;font-weight:bold;letter-spacing:-0.400px;">No</div>
<div class="t" style="left:1869.80px;top:456.64px;font-size:20.36px;color:#1e1d2a;letter-spacing:0.231px;">Graduated Date</div>
<div class="b" style="left:1870.8px;top:484.5px;width:10.600000000000136px;height:3.0px;background:#1e1d2a;"></div>
<div class="t" style="left:2193.60px;top:456.80px;font-size:19.91px;color:#1e1d2a;letter-spacing:0.033px;">Finished Date</div>
<div class="b" style="left:2195.6px;top:484.5px;width:10.599999999999909px;height:3.0px;background:#1e1d2a;"></div>
<div class="t" style="left:1545.80px;top:537.08px;font-size:19.96px;color:#1e1d2a;letter-spacing:0.044px;">Withdrawal Reason</div>
<div class="b" style="left:1545.8px;top:565px;width:10.600000000000136px;height:3px;background:#1e1d2a;"></div>
<div class="t" style="left:1870.80px;top:536.99px;font-size:20.22px;color:#1e1d2a;letter-spacing:0.179px;">Withdrawal Date</div>
<div class="b" style="left:1870.8px;top:565px;width:10.600000000000136px;height:3px;background:#1e1d2a;"></div>
<div class="b" style="left:507px;top:653.2px;width:2003.3000000000002px;height:472.5999999999999px;border:1.5px solid #d3d3d8;border-radius:9px;background:#f7f5f8;"></div>
<div class="t" style="left:528.00px;top:690.30px;font-size:24.51px;color:#1e1d2a;letter-spacing:0.144px;">Components</div>
<div class="b" style="left:529px;top:727px;width:96.70000000000005px;height:47.5px;border:1.8px solid #ad4ff2;border-radius:7px;"></div>
<svg style="position:absolute;left:547px;top:740.5px;width:20.5px;height:18.5px;overflow:visible" viewBox="0 0 20.5 18.5" ><circle cx="10.25" cy="2.8" r="2.8" fill="none" stroke="#ad4ff2" stroke-width="1.6"/><path d="M4.5 5 H16 C16.8 5 17.4 5.5 17.6 6.3 L20.4 16.7 C20.6 17.6 20 18.5 19 18.5 H1.5 C.5 18.5 -.1 17.6 .1 16.7 L2.9 6.3 C3.1 5.5 3.7 5 4.5 5Z" fill="#ad4ff2"/></svg>
<div class="t" style="left:580.00px;top:750.96px;font-size:20.29px;color:#ad4ff2;letter-spacing:1.500px;-webkit-text-stroke:0.7px #ad4ff2;">0%</div>
<div class="b" style="left:631.4px;top:727px;width:80.80000000000007px;height:47.5px;border:1.8px solid #7287f0;border-radius:7px;"></div>
<svg style="position:absolute;left:650px;top:741px;width:20.5px;height:18px;overflow:visible" viewBox="0 0 20.5 18" ><text x="0" y="7.5" font-family="Liberation Sans" font-size="8.5" font-weight="bold" fill="#7287f0">1</text><text x="0" y="17.5" font-family="Liberation Sans" font-size="8.5" font-weight="bold" fill="#7287f0">2</text><g stroke="#7287f0" stroke-width="2.2" stroke-linecap="round"><line x1="8" y1="3" x2="19.5" y2="3"/><line x1="8" y1="9.2" x2="19.5" y2="9.2"/><line x1="8" y1="15.3" x2="19.5" y2="15.3"/></g></svg>
<div class="t" style="left:684.00px;top:751.35px;font-size:19.19px;color:#7287f0;-webkit-text-stroke:0.7px #7287f0;">4</div>
<div class="b" style="left:718.5px;top:727px;width:80.10000000000002px;height:47.5px;border:1.8px solid #3cbff5;border-radius:7px;"></div>
<svg style="position:absolute;left:737px;top:741px;width:18px;height:18px;overflow:visible" viewBox="0 0 18 18" ><g stroke="#3cbff5" stroke-width="2.4" stroke-linecap="round"><line x1="9" y1="1.2" x2="9" y2="16.8"/><line x1="2.2" y1="5.1" x2="15.8" y2="12.9"/><line x1="2.2" y1="12.9" x2="15.8" y2="5.1"/></g></svg>
<div class="t" style="left:771.00px;top:751.35px;font-size:19.19px;color:#3cbff5;-webkit-text-stroke:0.7px #3cbff5;">4</div>
<div class="b" style="left:529px;top:785px;width:244.5px;height:46.799999999999955px;border:1.5px solid #d6e7f5;border-radius:8px;background:#f2f3f9;"></div>
<div class="t" style="left:544.60px;top:808.97px;font-size:20.27px;color:#bdbdc2;letter-spacing:0.062px;font-weight:bold;">Search...</div>
<div class="b" style="left:1996.5px;top:727px;width:187.8px;height:47px;border:1.6px solid #8097f5;border-radius:7px;"></div>
<div class="t" style="left:2011.00px;top:750.66px;font-size:22.04px;color:#6f86f0;letter-spacing:0.354px;-webkit-text-stroke:0.5px #6f86f0;">Grade Selected</div>
<div class="b" style="left:2190px;top:727px;width:226.3px;height:47px;border:1.6px solid #8097f5;border-radius:7px;"></div>
<div class="t" style="left:2205.80px;top:750.57px;font-size:22.29px;color:#6f86f0;letter-spacing:0.425px;-webkit-text-stroke:0.5px #6f86f0;">Complete Selected</div>
<div class="b" style="left:2432px;top:727px;width:57.6px;height:47px;border-radius:7px;background:#7389f0;"></div>
<svg style="position:absolute;left:2446px;top:737.5px;width:31px;height:27px;overflow:visible" viewBox="0 0 31 27" ><circle cx="10.5" cy="6.3" r="6.3" fill="#1a1a26"/><path d="M0 26 C0 19.5 4 15.5 9.5 15.5 H13 C14.3 15.5 15.5 15.8 16.6 16.4 C15.6 18.4 15.6 21.4 17 23.5 L18.8 26Z" fill="#1a1a26"/><polygon points="28.25,18.72 30.22,18.91 30.22,21.09 28.25,21.28 27.62,22.80 28.88,24.33 27.33,25.88 25.80,24.62 24.28,25.25 24.09,27.22 21.91,27.22 21.72,25.25 20.20,24.62 18.67,25.88 17.12,24.33 18.38,22.80 17.75,21.28 15.78,21.09 15.78,18.91 17.75,18.72 18.38,17.20 17.12,15.67 18.67,14.12 20.20,15.38 21.72,14.75 21.91,12.78 24.09,12.78 24.28,14.75 25.80,15.38 27.33,14.12 28.88,15.67 27.62,17.20" fill="#1a1a26"/><circle cx="23" cy="20" r="5.29" fill="#1a1a26"/><circle cx="23" cy="20" r="2.50" fill="#7389f0"/></svg>
<div class="b" style="left:528.3px;top:853px;width:1961.7px;height:251px;box-shadow:0 2px 6px rgba(120,130,150,0.18);background:#fff;"></div>
<div class="b" style="left:528.3px;top:853px;width:1961.7px;height:50.799999999999955px;background:#eef4f9;"></div>
<div class="b" style="left:579.05px;top:853px;width:1.5px;height:50.799999999999955px;background:#e9ebef;"></div>
<div class="b" style="left:579.05px;top:903.8px;width:1.5px;height:200.20000000000005px;background:#ececf0;"></div>
<div class="b" style="left:653.65px;top:853px;width:1.5px;height:50.799999999999955px;background:#e9ebef;"></div>
<div class="b" style="left:653.65px;top:903.8px;width:1.5px;height:200.20000000000005px;background:#ececf0;"></div>
<div class="b" style="left:927.55px;top:853px;width:1.5px;height:50.799999999999955px;background:#e9ebef;"></div>
<div class="b" style="left:927.55px;top:903.8px;width:1.5px;height:200.20000000000005px;background:#ececf0;"></div>
<div class="b" style="left:1202.55px;top:853px;width:1.5px;height:50.799999999999955px;background:#e9ebef;"></div>
<div class="b" style="left:1202.55px;top:903.8px;width:1.5px;height:200.20000000000005px;background:#ececf0;"></div>
<div class="b" style="left:1476.55px;top:853px;width:1.5px;height:50.799999999999955px;background:#e9ebef;"></div>
<div class="b" style="left:1476.55px;top:903.8px;width:1.5px;height:200.20000000000005px;background:#ececf0;"></div>
<div class="b" style="left:1751.45px;top:853px;width:1.5px;height:50.799999999999955px;background:#e9ebef;"></div>
<div class="b" style="left:1751.45px;top:903.8px;width:1.5px;height:200.20000000000005px;background:#ececf0;"></div>
<div class="b" style="left:2025.45px;top:853px;width:1.5px;height:50.799999999999955px;background:#e9ebef;"></div>
<div class="b" style="left:2025.45px;top:903.8px;width:1.5px;height:200.20000000000005px;background:#ececf0;"></div>
<div class="b" style="left:2299.95px;top:853px;width:1.5px;height:50.799999999999955px;background:#e9ebef;"></div>
<div class="b" style="left:2299.95px;top:903.8px;width:1.5px;height:200.20000000000005px;background:#ececf0;"></div>
<div class="b" style="left:2395.05px;top:853px;width:1.5px;height:50.799999999999955px;background:#e9ebef;"></div>
<div class="b" style="left:2395.05px;top:903.8px;width:1.5px;height:200.20000000000005px;background:#ececf0;"></div>
<div class="b" style="left:528.3px;top:952.75px;width:1961.7px;height:1.5px;background:#e3eef8;"></div>
<div class="b" style="left:528.3px;top:1002.75px;width:1961.7px;height:1.5px;background:#e3eef8;"></div>
<div class="b" style="left:528.3px;top:1052.85px;width:1961.7px;height:1.5px;background:#e3eef8;"></div>
<div class="b" style="left:528.3px;top:1103.25px;width:1961.7px;height:1.5px;background:#e3eef8;"></div>
<div class="b" style="left:544px;top:867.6px;width:20px;height:20px;border-radius:2.5px;background:#38bdf8;"></div>
<svg style="position:absolute;left:547.5px;top:871.6px;width:13px;height:12px;overflow:visible" viewBox="0 0 13 12" ><path d="M1.3 6.3 L4.8 9.8 L11.8 1.8" fill="none" stroke="#1b1b22" stroke-width="2.6" stroke-linecap="round" stroke-linejoin="round"/></svg>
<div class="t" style="left:584.70px;top:878.57px;font-size:21.73px;color:#1e1d2a;font-weight:bold;letter-spacing:-0.600px;">OoD</div>
<svg style="position:absolute;left:636px;top:870.0px;width:9px;height:15.5px;overflow:visible" viewBox="0 0 9 15.5" ><path d="M0.5 6 L4.5 0.5 L8.5 6Z" fill="#55555c"/><path d="M0.5 9.5 L4.5 15 L8.5 9.5Z" fill="#bdbdc2"/></svg>
<div class="t" style="left:661.00px;top:878.38px;font-size:22.25px;color:#1e1d2a;font-weight:bold;letter-spacing:-0.233px;">Code</div>
<svg style="position:absolute;left:724px;top:869.5px;width:9px;height:15.5px;overflow:visible" viewBox="0 0 9 15.5" ><path d="M0.5 6 L4.5 0.5 L8.5 6Z" fill="#55555c"/><path d="M0.5 9.5 L4.5 15 L8.5 9.5Z" fill="#55555c"/></svg>
<svg style="position:absolute;left:746px;top:873.5px;width:13px;height:12px;overflow:visible" viewBox="0 0 13 12" ><path d="M0 0.5 H13.5 L8.3 6.3 V12 L5.2 10.5 V6.3Z" fill="#55555c"/></svg>
<div class="t" style="left:936.30px;top:878.55px;font-size:21.79px;color:#1e1d2a;font-weight:bold;letter-spacing:-0.250px;">Title</div>
<svg style="position:absolute;left:989px;top:869.5px;width:9px;height:15.5px;overflow:visible" viewBox="0 0 9 15.5" ><path d="M0.5 6 L4.5 0.5 L8.5 6Z" fill="#55555c"/><path d="M0.5 9.5 L4.5 15 L8.5 9.5Z" fill="#55555c"/></svg>
<div class="t" style="left:1209.40px;top:878.40px;font-size:22.21px;color:#1e1d2a;font-weight:bold;letter-spacing:-0.171px;">Completion Code</div>
<svg style="position:absolute;left:1396px;top:869.5px;width:9px;height:15.5px;overflow:visible" viewBox="0 0 9 15.5" ><path d="M0.5 6 L4.5 0.5 L8.5 6Z" fill="#55555c"/><path d="M0.5 9.5 L4.5 15 L8.5 9.5Z" fill="#55555c"/></svg>
<div class="t" style="left:1483.60px;top:878.31px;font-size:22.48px;color:#1e1d2a;font-weight:bold;letter-spacing:-0.107px;">Completion Date</div>
<svg style="position:absolute;left:1667px;top:869.5px;width:9px;height:15.5px;overflow:visible" viewBox="0 0 9 15.5" ><path d="M0.5 6 L4.5 0.5 L8.5 6Z" fill="#55555c"/><path d="M0.5 9.5 L4.5 15 L8.5 9.5Z" fill="#55555c"/></svg>
<div class="t" style="left:1758.00px;top:878.13px;font-size:22.99px;color:#1e1d2a;font-weight:bold;letter-spacing:0.125px;">Grade</div>
<svg style="position:absolute;left:1830px;top:869.5px;width:9px;height:15.5px;overflow:visible" viewBox="0 0 9 15.5" ><path d="M0.5 6 L4.5 0.5 L8.5 6Z" fill="#55555c"/><path d="M0.5 9.5 L4.5 15 L8.5 9.5Z" fill="#55555c"/></svg>
<div class="t" style="left:2032.60px;top:878.20px;font-size:22.80px;color:#1e1d2a;font-weight:bold;letter-spacing:0.100px;">Start / End</div>
<svg style="position:absolute;left:2148px;top:869.5px;width:9px;height:15.5px;overflow:visible" viewBox="0 0 9 15.5" ><path d="M0.5 9.5 L4.5 15 L8.5 9.5Z" fill="#55555c"/></svg>
<div class="b" style="left:2300.7px;top:853px;width:95px;height:50px;overflow:hidden;"><div class="t" style="left:7.5px;top:25px;font-size:22.7px;font-weight:bold;color:#1e1d2a;letter-spacing:0.6px">Required</div></div>
<div class="t" style="left:2402.80px;top:878.51px;font-size:21.88px;color:#1e1d2a;font-weight:bold;letter-spacing:-0.133px;">Actions</div>
<div class="b" style="left:544px;top:917.8px;width:20px;height:20px;border-radius:2.5px;background:#38bdf8;"></div>
<svg style="position:absolute;left:547.5px;top:921.8px;width:13px;height:12px;overflow:visible" viewBox="0 0 13 12" ><path d="M1.3 6.3 L4.8 9.8 L11.8 1.8" fill="none" stroke="#1b1b22" stroke-width="2.6" stroke-linecap="round" stroke-linejoin="round"/></svg>
<div class="t" style="left:584.70px;top:927.94px;font-size:21.22px;color:#1e1d2a;">1</div>
<div class="t" style="left:699.00px;top:928.30px;font-size:20.19px;color:#3cbff5;letter-spacing:-0.383px;">NZDB501</div>
<div class="t" style="left:934.00px;top:927.56px;font-size:22.32px;color:#2a2a33;letter-spacing:0.395px;">Business Communication</div>
<div class="t" style="left:1209.40px;top:927.61px;font-size:22.19px;color:#6f86f0;letter-spacing:0.330px;">Still to complete course</div>
<div class="b" style="left:1759px;top:926.8px;width:10.5px;height:3.0px;background:#1e1d2a;"></div>
<div class="t" style="left:2031.60px;top:927.61px;font-size:22.18px;color:#2a2a33;letter-spacing:0.409px;">19-05-2025 to 23-02-2026</div>
<div class="t" style="left:2311.00px;top:927.90px;font-size:21.34px;color:#2a2a33;letter-spacing:0.150px;">Yes</div>
<svg style="position:absolute;left:2368px;top:918.0px;width:20.5px;height:20.5px;overflow:visible" viewBox="0 0 20.5 20.5" ><g transform="scale(1.025)"><g transform="translate(10,10) rotate(-45) translate(-13.6,0)"><path d="M0 0 L1.2 -2.2 C2 -3.2 3.5 -3.6 5.5 -3.6 H19.4 V3.6 H5.5 C3.5 3.6 2 3.2 1.2 2.2Z" fill="#b8e6d2"/><path d="M20.9 -3.6 H25 a2.2 2.2 0 0 1 2.2 2.2 V1.4 a2.2 2.2 0 0 1 -2.2 2.2 H20.9Z" fill="#b8e6d2"/><rect x="8.2" y="-0.75" width="9" height="1.5" fill="#fff" opacity="0.85"/><path d="M2 0 L5 -1.7 V1.7Z" fill="#fff" opacity="0.9"/></g></g></svg>
<svg style="position:absolute;left:2433px;top:917.5px;width:20.5px;height:20.5px;overflow:visible" viewBox="0 0 20.5 20.5" ><g transform="scale(1.025)"><g transform="translate(10,10) rotate(-45) translate(-13.6,0)"><path d="M0 0 L1.2 -2.2 C2 -3.2 3.5 -3.6 5.5 -3.6 H19.4 V3.6 H5.5 C3.5 3.6 2 3.2 1.2 2.2Z" fill="#0fc11b"/><path d="M20.9 -3.6 H25 a2.2 2.2 0 0 1 2.2 2.2 V1.4 a2.2 2.2 0 0 1 -2.2 2.2 H20.9Z" fill="#0fc11b"/><rect x="8.2" y="-0.75" width="9" height="1.5" fill="#fff" opacity="0.85"/><path d="M2 0 L5 -1.7 V1.7Z" fill="#fff" opacity="0.9"/></g></g></svg>
<div class="b" style="left:544px;top:967.5px;width:20px;height:20px;border-radius:2.5px;background:#38bdf8;"></div>
<svg style="position:absolute;left:547.5px;top:971.5px;width:13px;height:12px;overflow:visible" viewBox="0 0 13 12" ><path d="M1.3 6.3 L4.8 9.8 L11.8 1.8" fill="none" stroke="#1b1b22" stroke-width="2.6" stroke-linecap="round" stroke-linejoin="round"/></svg>
<div class="t" style="left:584.20px;top:978.04px;font-size:21.22px;color:#1e1d2a;">2</div>
<div class="t" style="left:699.00px;top:978.12px;font-size:21.01px;color:#3cbff5;letter-spacing:-0.250px;">NZDB502</div>
<div class="t" style="left:935.00px;top:977.68px;font-size:22.26px;color:#2a2a33;letter-spacing:0.361px;">Organisational Behaviour</div>
<div class="t" style="left:1209.40px;top:977.71px;font-size:22.19px;color:#6f86f0;letter-spacing:0.330px;">Still to complete course</div>
<div class="b" style="left:1759px;top:976.9px;width:10.5px;height:3.0px;background:#1e1d2a;"></div>
<div class="t" style="left:2031.60px;top:977.71px;font-size:22.18px;color:#2a2a33;letter-spacing:0.409px;">19-05-2025 to 23-02-2026</div>
<div class="t" style="left:2311.00px;top:978.00px;font-size:21.34px;color:#2a2a33;letter-spacing:0.150px;">Yes</div>
<svg style="position:absolute;left:2368px;top:968.1px;width:20.5px;height:20.5px;overflow:visible" viewBox="0 0 20.5 20.5" ><g transform="scale(1.025)"><g transform="translate(10,10) rotate(-45) translate(-13.6,0)"><path d="M0 0 L1.2 -2.2 C2 -3.2 3.5 -3.6 5.5 -3.6 H19.4 V3.6 H5.5 C3.5 3.6 2 3.2 1.2 2.2Z" fill="#b8e6d2"/><path d="M20.9 -3.6 H25 a2.2 2.2 0 0 1 2.2 2.2 V1.4 a2.2 2.2 0 0 1 -2.2 2.2 H20.9Z" fill="#b8e6d2"/><rect x="8.2" y="-0.75" width="9" height="1.5" fill="#fff" opacity="0.85"/><path d="M2 0 L5 -1.7 V1.7Z" fill="#fff" opacity="0.9"/></g></g></svg>
<svg style="position:absolute;left:2433px;top:967.6px;width:20.5px;height:20.5px;overflow:visible" viewBox="0 0 20.5 20.5" ><g transform="scale(1.025)"><g transform="translate(10,10) rotate(-45) translate(-13.6,0)"><path d="M0 0 L1.2 -2.2 C2 -3.2 3.5 -3.6 5.5 -3.6 H19.4 V3.6 H5.5 C3.5 3.6 2 3.2 1.2 2.2Z" fill="#0fc11b"/><path d="M20.9 -3.6 H25 a2.2 2.2 0 0 1 2.2 2.2 V1.4 a2.2 2.2 0 0 1 -2.2 2.2 H20.9Z" fill="#0fc11b"/><rect x="8.2" y="-0.75" width="9" height="1.5" fill="#fff" opacity="0.85"/><path d="M2 0 L5 -1.7 V1.7Z" fill="#fff" opacity="0.9"/></g></g></svg>
<div class="b" style="left:544px;top:1017.5px;width:20px;height:20px;border-radius:2.5px;background:#38bdf8;"></div>
<svg style="position:absolute;left:547.5px;top:1021.5px;width:13px;height:12px;overflow:visible" viewBox="0 0 13 12" ><path d="M1.3 6.3 L4.8 9.8 L11.8 1.8" fill="none" stroke="#1b1b22" stroke-width="2.6" stroke-linecap="round" stroke-linejoin="round"/></svg>
<div class="t" style="left:584.20px;top:1028.14px;font-size:21.22px;color:#1e1d2a;">3</div>
<div class="t" style="left:699.00px;top:1028.22px;font-size:21.01px;color:#3cbff5;letter-spacing:-0.250px;">NZDB503</div>
<div class="t" style="left:936.00px;top:1027.86px;font-size:22.04px;color:#2a2a33;letter-spacing:0.250px;">Accounting Principles</div>
<div class="t" style="left:1209.40px;top:1027.81px;font-size:22.19px;color:#6f86f0;letter-spacing:0.330px;">Still to complete course</div>
<div class="b" style="left:1759px;top:1027.0px;width:10.5px;height:3.0px;background:#1e1d2a;"></div>
<div class="t" style="left:2031.60px;top:1027.81px;font-size:22.18px;color:#2a2a33;letter-spacing:0.409px;">19-05-2025 to 23-02-2026</div>
<div class="t" style="left:2311.00px;top:1028.10px;font-size:21.34px;color:#2a2a33;letter-spacing:0.150px;">Yes</div>
<svg style="position:absolute;left:2368px;top:1018.2px;width:20.5px;height:20.5px;overflow:visible" viewBox="0 0 20.5 20.5" ><g transform="scale(1.025)"><g transform="translate(10,10) rotate(-45) translate(-13.6,0)"><path d="M0 0 L1.2 -2.2 C2 -3.2 3.5 -3.6 5.5 -3.6 H19.4 V3.6 H5.5 C3.5 3.6 2 3.2 1.2 2.2Z" fill="#b8e6d2"/><path d="M20.9 -3.6 H25 a2.2 2.2 0 0 1 2.2 2.2 V1.4 a2.2 2.2 0 0 1 -2.2 2.2 H20.9Z" fill="#b8e6d2"/><rect x="8.2" y="-0.75" width="9" height="1.5" fill="#fff" opacity="0.85"/><path d="M2 0 L5 -1.7 V1.7Z" fill="#fff" opacity="0.9"/></g></g></svg>
<svg style="position:absolute;left:2433px;top:1017.7px;width:20.5px;height:20.5px;overflow:visible" viewBox="0 0 20.5 20.5" ><g transform="scale(1.025)"><g transform="translate(10,10) rotate(-45) translate(-13.6,0)"><path d="M0 0 L1.2 -2.2 C2 -3.2 3.5 -3.6 5.5 -3.6 H19.4 V3.6 H5.5 C3.5 3.6 2 3.2 1.2 2.2Z" fill="#0fc11b"/><path d="M20.9 -3.6 H25 a2.2 2.2 0 0 1 2.2 2.2 V1.4 a2.2 2.2 0 0 1 -2.2 2.2 H20.9Z" fill="#0fc11b"/><rect x="8.2" y="-0.75" width="9" height="1.5" fill="#fff" opacity="0.85"/><path d="M2 0 L5 -1.7 V1.7Z" fill="#fff" opacity="0.9"/></g></g></svg>
<div class="b" style="left:544px;top:1067.6px;width:20px;height:20px;border-radius:2.5px;background:#38bdf8;"></div>
<svg style="position:absolute;left:547.5px;top:1071.6px;width:13px;height:12px;overflow:visible" viewBox="0 0 13 12" ><path d="M1.3 6.3 L4.8 9.8 L11.8 1.8" fill="none" stroke="#1b1b22" stroke-width="2.6" stroke-linecap="round" stroke-linejoin="round"/></svg>
<div class="t" style="left:585.20px;top:1078.24px;font-size:21.22px;color:#1e1d2a;">4</div>
<div class="t" style="left:699.00px;top:1078.29px;font-size:21.08px;color:#3cbff5;letter-spacing:-0.167px;">NZDB504</div>
<div class="t" style="left:934.00px;top:1078.05px;font-size:21.77px;color:#2a2a33;letter-spacing:0.158px;">Business Environment</div>
<div class="t" style="left:1209.40px;top:1077.91px;font-size:22.19px;color:#6f86f0;letter-spacing:0.330px;">Still to complete course</div>
<div class="b" style="left:1759px;top:1077.1px;width:10.5px;height:3.0px;background:#1e1d2a;"></div>
<div class="t" style="left:2031.60px;top:1077.91px;font-size:22.18px;color:#2a2a33;letter-spacing:0.409px;">19-05-2025 to 23-02-2026</div>
<div class="t" style="left:2311.00px;top:1078.20px;font-size:21.34px;color:#2a2a33;letter-spacing:0.150px;">Yes</div>
<svg style="position:absolute;left:2368px;top:1068.3px;width:20.5px;height:20.5px;overflow:visible" viewBox="0 0 20.5 20.5" ><g transform="scale(1.025)"><g transform="translate(10,10) rotate(-45) translate(-13.6,0)"><path d="M0 0 L1.2 -2.2 C2 -3.2 3.5 -3.6 5.5 -3.6 H19.4 V3.6 H5.5 C3.5 3.6 2 3.2 1.2 2.2Z" fill="#b8e6d2"/><path d="M20.9 -3.6 H25 a2.2 2.2 0 0 1 2.2 2.2 V1.4 a2.2 2.2 0 0 1 -2.2 2.2 H20.9Z" fill="#b8e6d2"/><rect x="8.2" y="-0.75" width="9" height="1.5" fill="#fff" opacity="0.85"/><path d="M2 0 L5 -1.7 V1.7Z" fill="#fff" opacity="0.9"/></g></g></svg>
<svg style="position:absolute;left:2433px;top:1067.8px;width:20.5px;height:20.5px;overflow:visible" viewBox="0 0 20.5 20.5" ><g transform="scale(1.025)"><g transform="translate(10,10) rotate(-45) translate(-13.6,0)"><path d="M0 0 L1.2 -2.2 C2 -3.2 3.5 -3.6 5.5 -3.6 H19.4 V3.6 H5.5 C3.5 3.6 2 3.2 1.2 2.2Z" fill="#0fc11b"/><path d="M20.9 -3.6 H25 a2.2 2.2 0 0 1 2.2 2.2 V1.4 a2.2 2.2 0 0 1 -2.2 2.2 H20.9Z" fill="#0fc11b"/><rect x="8.2" y="-0.75" width="9" height="1.5" fill="#fff" opacity="0.85"/><path d="M2 0 L5 -1.7 V1.7Z" fill="#fff" opacity="0.9"/></g></g></svg>
<div class="b" style="left:2046px;top:776px;width:448px;height:104px;background:#f7f5f8;box-shadow:0 6px 14px rgba(60,60,80,0.22);"></div>
<div class="b" style="left:2048.5px;top:778.3px;width:442.3000000000002px;height:47.700000000000045px;border:4px solid #e8112d;"></div>
<div class="b" style="left:2048.5px;top:828.3px;width:444.0px;height:49.40000000000009px;border:4px solid #f6891c;"></div>
<svg style="position:absolute;left:2070.5px;top:799px;width:22px;height:16px;overflow:visible" viewBox="0 0 22 16" ><g stroke="#17161f" stroke-width="2.6" stroke-linecap="round"><line x1="1.3" y1="1.4" x2="18.3" y2="1.4"/><line x1="3.8" y1="7.7" x2="20.8" y2="7.7"/><line x1="1.3" y1="14" x2="18.3" y2="14"/></g></svg>
<div class="t" style="left:2102.70px;top:806.52px;font-size:23.02px;color:#1e1d2a;letter-spacing:0.177px;">Map Components</div>
<svg style="position:absolute;left:2071.5px;top:836.6px;width:20px;height:20px;overflow:visible" viewBox="0 0 20 20" ><g transform="scale(1.0)"><g transform="translate(10,10) rotate(-45) translate(-13.6,0)"><path d="M0 0 L1.2 -2.2 C2 -3.2 3.5 -3.6 5.5 -3.6 H19.4 V3.6 H5.5 C3.5 3.6 2 3.2 1.2 2.2Z" fill="#17161f"/><path d="M20.9 -3.6 H25 a2.2 2.2 0 0 1 2.2 2.2 V1.4 a2.2 2.2 0 0 1 -2.2 2.2 H20.9Z" fill="#17161f"/><rect x="8.2" y="-0.75" width="9" height="1.5" fill="#f7f5f8" opacity="0.85"/><path d="M2 0 L5 -1.7 V1.7Z" fill="#f7f5f8" opacity="0.9"/></g></g></svg>
<div class="t" style="left:2102.70px;top:847.18px;font-size:22.56px;color:#1e1d2a;">Bulk Update Enrolment Components</div>
<div class="t" style="left:1520.70px;top:801.90px;font-size:20.48px;color:#e8112d;letter-spacing:-0.334px;">Click to add/remove Components from an Enrolment</div>
<svg style="position:absolute;left:1997.7px;top:795.625px;width:50.0px;height:12.75px;overflow:visible" viewBox="0 0 50.0 12.75" ><line x1="1.6" y1="6.375" x2="44.9" y2="6.375" stroke="#e8112d" stroke-width="3.2" stroke-linecap="round"/><path d="M50.0 6.375 L40.225 0 L42.775 6.375 L40.225 12.75Z" fill="#e8112d"/></svg>
<div class="t" style="left:1519.70px;top:829.50px;font-size:20.48px;color:#f6891c;letter-spacing:-0.298px;">If at least one Component is selected, you can click to</div>
<div class="t" style="left:1520.70px;top:853.63px;font-size:20.69px;color:#f6891c;letter-spacing:-0.094px;">&quot;Bulk Update&quot; them.</div>
<svg style="position:absolute;left:1997.7px;top:840.225px;width:50.0px;height:12.75px;overflow:visible" viewBox="0 0 50.0 12.75" ><line x1="1.6" y1="6.375" x2="44.9" y2="6.375" stroke="#f6891c" stroke-width="3.2" stroke-linecap="round"/><path d="M50.0 6.375 L40.225 0 L42.775 6.375 L40.225 12.75Z" fill="#f6891c"/></svg>
</body></html>
